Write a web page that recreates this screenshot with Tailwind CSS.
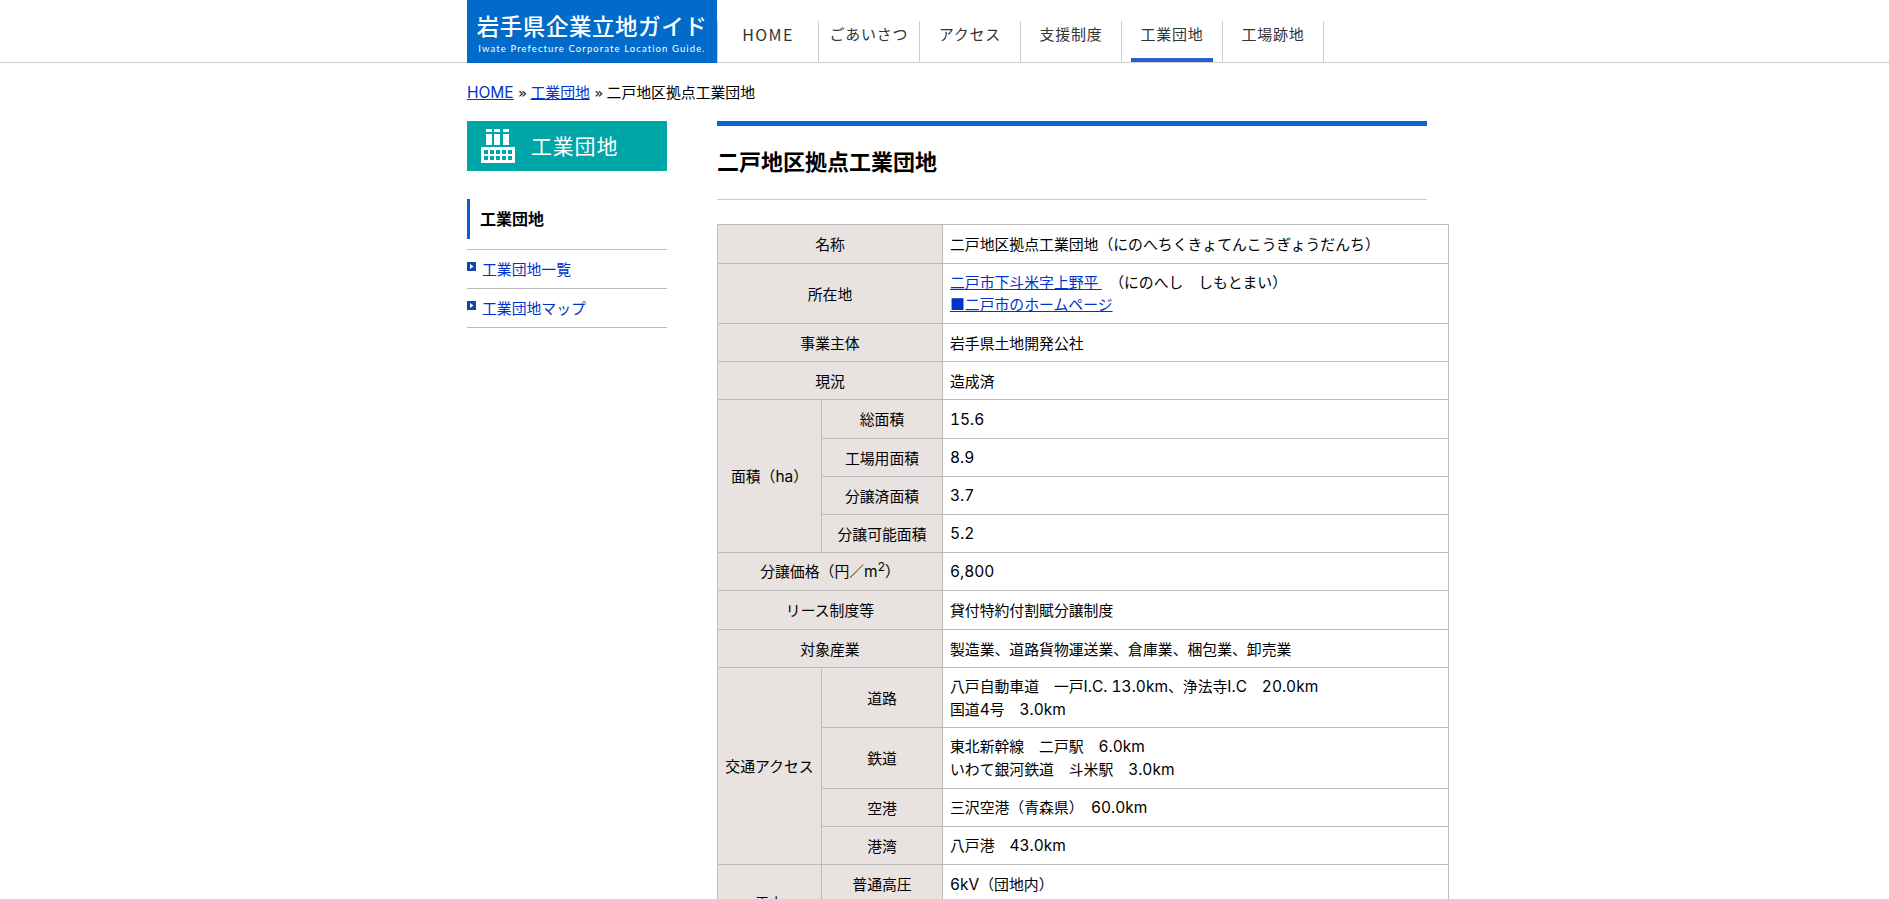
<!DOCTYPE html>
<html lang="ja">
<head>
<meta charset="utf-8">
<script src="https://cdn.jsdelivr.net/npm/@tailwindcss/browser@4"></script>
</head>
<body class="h-[899px] overflow-hidden bg-white text-black text-[14.85px] leading-[1.5] font-['Noto_Sans_CJK_JP',sans-serif]">
<header class="h-[63px] border-b border-[#ccc]">
  <div class="w-[955px] ml-[467px] flex h-[62px]">
    <a class="w-[250px] h-[63px] bg-[#006bc9] text-white flex flex-col items-center shrink-0 relative z-10">
      <span class="text-[22.5px] leading-[22px] mt-[14px] tracking-[0.55px] whitespace-nowrap font-medium">岩手県企業立地ガイド</span>
      <span class="text-[9.5px] leading-[10px] mt-[8px] tracking-[1.1px] whitespace-nowrap font-['Lato',sans-serif]">Iwate Prefecture Corporate Location Guide.</span>
    </a>
    <nav class="flex self-end h-[41px] text-[15px] text-[#333] border-l border-[#ccc] tracking-[0.75px]">
      <a class="w-[101px] border-r border-[#ccc] flex justify-center pt-[1px] leading-[24px] text-[16px] tracking-[1.4px]">HOME</a>
      <a class="w-[101px] border-r border-[#ccc] flex justify-center pt-[1px] leading-[24px]">ごあいさつ</a>
      <a class="w-[101px] border-r border-[#ccc] flex justify-center pt-[1px] leading-[24px]">アクセス</a>
      <a class="w-[101px] border-r border-[#ccc] flex justify-center pt-[1px] leading-[24px]">支援制度</a>
      <a class="w-[101px] border-r border-[#ccc] flex justify-center pt-[1px] leading-[24px] relative">工業団地<span class="absolute left-[9px] right-[9px] bottom-0 h-[4px] bg-[#2b5fd0]"></span></a>
      <a class="w-[101px] border-r border-[#ccc] flex justify-center pt-[1px] leading-[24px]">工場跡地</a>
    </nav>
  </div>
</header>
<div class="ml-[467px] w-[1000px]">
  <p class="mt-[17px] h-[41px] leading-[23px]"><a class="text-[#0033cc] underline font-['Inter',sans-serif] text-[15.5px]">HOME</a> <span class="font-['DejaVu_Sans',sans-serif] ml-[1px]">»</span> <a class="text-[#0033cc] underline">工業団地</a> <span class="font-['DejaVu_Sans',sans-serif] ml-[1px]">»</span> 二戸地区拠点工業団地</p>
  <div class="flex">
    <aside class="w-[200px] shrink-0 mr-[50px]">
      <div class="h-[50px] bg-[#00a5a8] flex items-center text-white text-[21px] tracking-[0.8px]">
        <svg class="ml-[14px] mr-[16px]" width="34" height="34" viewBox="0 0 34 34" fill="#fff"><path d="M5 0h6v3H5zM13 0h6v3h-6zM22 0h6v3h-6zM5 5h6v11H5zM13 5h6v11h-6zM22 5h6v11h-6z"/><path fill-rule="evenodd" d="M0 18h34v16H0zM3 21v4h4v-4zM9 21v4h4v-4zM15 21v4h4v-4zM21 21v4h4v-4zM27 21v4h4v-4zM3 27v4h4v-4zM9 27v4h4v-4zM15 27v4h4v-4zM21 27v4h4v-4zM27 27v4h4v-4z"/></svg>
        <span>工業団地</span>
      </div>
      <div class="mt-[28px] h-[40px] border-l-[3px] border-[#0a5fd0] pl-[10px] pb-[2px] flex items-center font-bold text-[16px]">工業団地</div>
      <ul class="mt-[10px] border-t border-[#bbb]">
        <li class="h-[39px] border-b border-[#bbb] flex items-start text-[#0033cc]"><svg class="mt-[12px] mr-[6px]" width="9" height="9" viewBox="0 0 9 9"><rect width="9" height="9" fill="#0d47a8"/><path d="M3 2l3.5 2.5L3 7z" fill="#fff"/></svg><span class="leading-[38px]">工業団地一覧</span></li>
        <li class="h-[39px] border-b border-[#bbb] flex items-start text-[#0033cc]"><svg class="mt-[12px] mr-[6px]" width="9" height="9" viewBox="0 0 9 9"><rect width="9" height="9" fill="#0d47a8"/><path d="M3 2l3.5 2.5L3 7z" fill="#fff"/></svg><span class="leading-[37px]">工業団地マップ</span></li>
      </ul>
    </aside>
    <main class="w-[710px]">
      <div class="border-t-[5px] border-[#0a64d2] w-[710px] h-[79px] border-b border-b-[#ccc]">
        <h1 class="text-[22px] font-bold leading-[28px] mt-[20px]">二戸地区拠点工業団地</h1>
      </div>
      <table class="mt-[24px] w-[732px] table-fixed border-collapse [&_td]:border [&_td]:border-[#bbb] [&_th]:border [&_th]:border-[#bbb] [&_th]:bg-[#e8e3e1] [&_th]:font-normal [&_td]:px-[7px] [&_th]:px-0 [&_td]:leading-[22px] [&_th]:leading-[22px] [&_span]:font-['Inter',sans-serif] [&_span]:text-[15.5px] [&_span]:tabular-nums [&_sup]:font-['Inter',sans-serif] [&_sup]:text-[12px]">
        <colgroup><col class="w-[104px]"><col class="w-[121px]"><col></colgroup>
        <tbody>
        <tr class="h-[39px]"><th colspan="2">名称</th><td>二戸地区拠点工業団地（にのへちくきょてんこうぎょうだんち）</td></tr>
        <tr class="h-[60px]"><th colspan="2">所在地</th><td class="pb-[1px]"><a class="text-[#0033cc] underline">二戸市下斗米字上野平 </a>　（にのへし　しもとまい）<br><a class="text-[#0033cc] underline">■二戸市のホームページ</a></td></tr>
        <tr class="h-[38px]"><th colspan="2">事業主体</th><td>岩手県土地開発公社</td></tr>
        <tr class="h-[38px]"><th colspan="2">現況</th><td>造成済</td></tr>
        <tr class="h-[39px]"><th rowspan="4">面積（<span>ha</span>）</th><th>総面積</th><td><span>15.6</span></td></tr>
        <tr class="h-[38px]"><th>工場用面積</th><td><span>8.9</span></td></tr>
        <tr class="h-[38px]"><th>分譲済面積</th><td><span>3.7</span></td></tr>
        <tr class="h-[38px]"><th>分譲可能面積</th><td><span>5.2</span></td></tr>
        <tr class="h-[38px]"><th colspan="2">分譲価格（円／<span>m</span><sup>2</sup>）</th><td><span>6,800</span></td></tr>
        <tr class="h-[39px]"><th colspan="2">リース制度等</th><td>貸付特約付割賦分譲制度</td></tr>
        <tr class="h-[38px]"><th colspan="2">対象産業</th><td>製造業、道路貨物運送業、倉庫業、梱包業、卸売業</td></tr>
        <tr class="h-[60px]"><th rowspan="4">交通アクセス</th><th>道路</th><td>八戸自動車道　一戸<span>I.C. 13.0km</span>、浄法寺<span>I.C</span>　<span>20.0km</span><br>国道<span>4</span>号　<span>3.0km</span></td></tr>
        <tr class="h-[61px]"><th>鉄道</th><td>東北新幹線　二戸駅　<span>6.0km</span><br>いわて銀河鉄道　斗米駅　<span>3.0km</span></td></tr>
        <tr class="h-[38px]"><th>空港</th><td>三沢空港（青森県）　<span>60.0km</span></td></tr>
        <tr class="h-[38px]"><th>港湾</th><td>八戸港　<span>43.0km</span></td></tr>
        <tr class="h-[39px]"><th rowspan="2">電力</th><th>普通高圧</th><td><span>6kV</span>（団地内）</td></tr>
        <tr class="h-[38px]"><th>特別高圧</th><td><span>66kV</span>（団地内）</td></tr>
        </tbody>
      </table>
    </main>
  </div>
</div>
</body>
</html>
